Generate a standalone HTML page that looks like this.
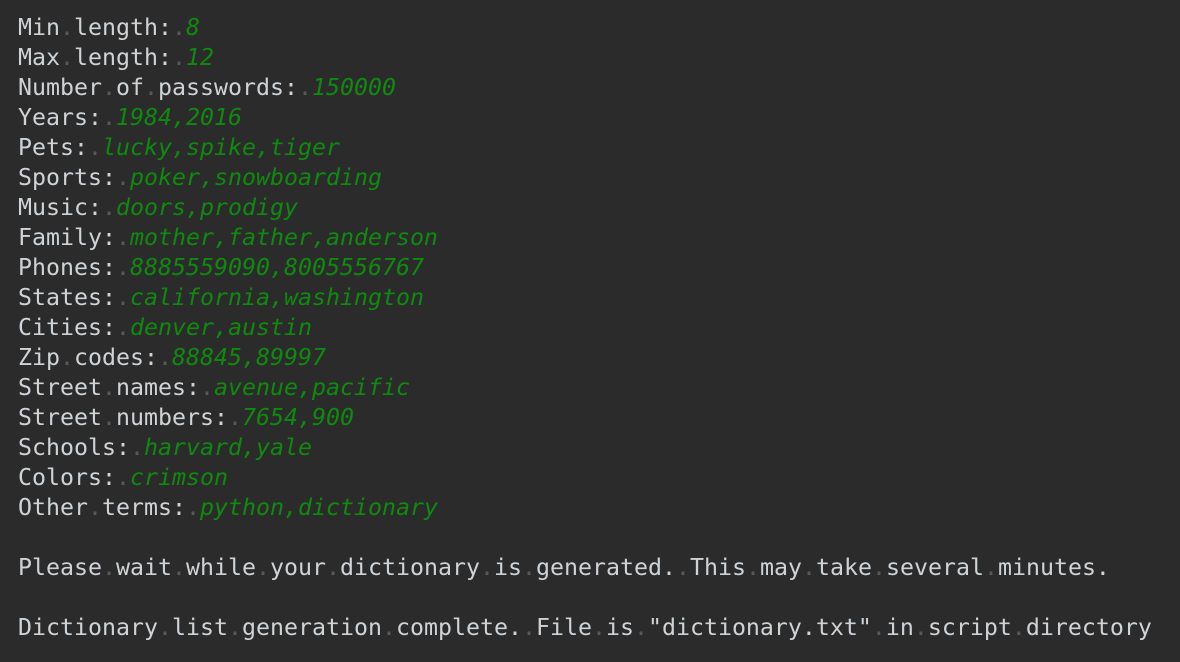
<!DOCTYPE html><html><head><style>
body{margin:0;background:#2b2b2b;width:1180px;height:662px;overflow:hidden}
pre{margin:0;padding:13px 0 0 18px;font-family:"DejaVu Sans Mono","Liberation Mono",monospace;font-size:23.25px;line-height:30px;color:#d0d3d6}
i{color:#0f8a0f}
b{font-weight:normal;color:#5a5a5a}
</style></head><body><pre>Min<b>.</b>length:<b>.</b><i>8</i>
Max<b>.</b>length:<b>.</b><i>12</i>
Number<b>.</b>of<b>.</b>passwords:<b>.</b><i>150000</i>
Years:<b>.</b><i>1984,2016</i>
Pets:<b>.</b><i>lucky,spike,tiger</i>
Sports:<b>.</b><i>poker,snowboarding</i>
Music:<b>.</b><i>doors,prodigy</i>
Family:<b>.</b><i>mother,father,anderson</i>
Phones:<b>.</b><i>8885559090,8005556767</i>
States:<b>.</b><i>california,washington</i>
Cities:<b>.</b><i>denver,austin</i>
Zip<b>.</b>codes:<b>.</b><i>88845,89997</i>
Street<b>.</b>names:<b>.</b><i>avenue,pacific</i>
Street<b>.</b>numbers:<b>.</b><i>7654,900</i>
Schools:<b>.</b><i>harvard,yale</i>
Colors:<b>.</b><i>crimson</i>
Other<b>.</b>terms:<b>.</b><i>python,dictionary</i>

Please<b>.</b>wait<b>.</b>while<b>.</b>your<b>.</b>dictionary<b>.</b>is<b>.</b>generated.<b>.</b>This<b>.</b>may<b>.</b>take<b>.</b>several<b>.</b>minutes.

Dictionary<b>.</b>list<b>.</b>generation<b>.</b>complete.<b>.</b>File<b>.</b>is<b>.</b>"dictionary.txt"<b>.</b>in<b>.</b>script<b>.</b>directory</pre></body></html>
